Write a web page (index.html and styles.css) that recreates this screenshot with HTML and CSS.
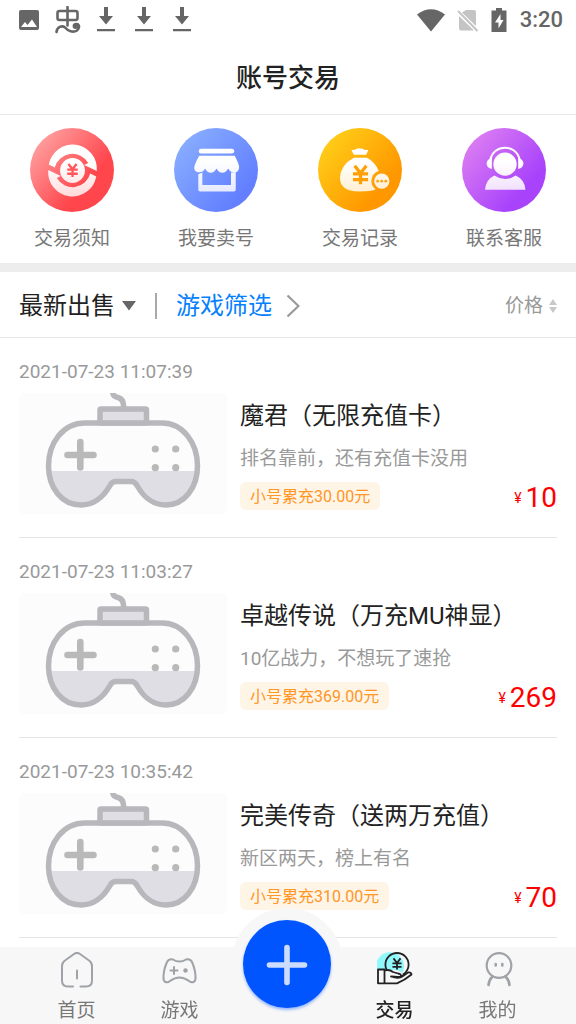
FILE: index.html
```html
<!DOCTYPE html>
<html lang="zh-CN">
<head>
<meta charset="utf-8">
<meta name="viewport" content="width=device-width, initial-scale=1">
<title>账号交易</title>
<link rel="stylesheet" href="styles.css">
</head>
<body>
<svg class="defs" aria-hidden="true">
  <defs>
    <linearGradient id="red" x1="0.1" y1="0.2" x2="0.8" y2="0.8"><stop offset="0" stop-color="#ff9a9a"/><stop offset="0.8" stop-color="#ff464d"/></linearGradient>
    <linearGradient id="blue" x1="0.1" y1="0.2" x2="0.8" y2="0.8"><stop offset="0" stop-color="#86abff"/><stop offset="1" stop-color="#637fff"/></linearGradient>
    <linearGradient id="gold" x1="0.1" y1="0.2" x2="0.8" y2="0.8"><stop offset="0" stop-color="#ffcb17"/><stop offset="0.9" stop-color="#ff9800"/></linearGradient>
    <linearGradient id="violet" x1="0.1" y1="0.2" x2="0.8" y2="0.8"><stop offset="0" stop-color="#d97af3"/><stop offset="0.9" stop-color="#a843fb"/></linearGradient>
    <linearGradient id="shade" x1="0" y1="0" x2="0" y2="83" gradientUnits="userSpaceOnUse"><stop offset="0.4" stop-color="#fff"/><stop offset="0.8" stop-color="#fff" stop-opacity="0.8"/></linearGradient>
    <clipPath id="lower"><rect x="0" y="78" width="208" height="43"/></clipPath>
  </defs>
  <symbol id="yen" viewBox="-10 -10 20 20"><path d="M-5 -8L0 -1.500L5 -8M0 -1.500V8M-6.500 -1H6.500M-6.500 4H6.500"/></symbol>
  <symbol id="download" viewBox="0 0 20 26"><path d="M8 0h4v9h5l-7 8.500L3 9h5zM1 22h18v2.300H1z" fill="#666"/></symbol>
  <symbol id="pad" viewBox="0 0 208 121">
    <path d="M66 30H143C164 30 178.500 50 178.500 73C178.500 95 165 112 147 112C132 112 124 103 118 92.500Q116 88.500 112 88.500H97Q93 88.500 91 92.500C85 103 76 112 62 112C43 112 29.500 95 29.500 73C29.500 50 44 30 66 30Z" fill="#dfdee4" clip-path="url(#lower)"/>
    <g fill="none" stroke="#b8b7bc" stroke-width="5.500">
      <path d="M66 30H143C164 30 178.500 50 178.500 73C178.500 95 165 112 147 112C132 112 124 103 118 92.500Q116 88.500 112 88.500H97Q93 88.500 91 92.500C85 103 76 112 62 112C43 112 29.500 95 29.500 73C29.500 50 44 30 66 30Z"/>
      <path d="M93.500 -1C94 3 96 4 99 4.500C103 5.500 104.700 9 104.700 14"/>
      <rect x="81" y="16" width="46.500" height="14" rx="1" fill="#dfdee4"/>
    </g>
    <path d="M48.500 62H74.500M61.300 49V74.500" stroke="#b9b9b9" stroke-width="6.600" stroke-linecap="round"/>
    <g fill="#b9b9b9"><circle cx="136.300" cy="56" r="3.600"/><circle cx="156.700" cy="56" r="3.600"/><circle cx="136.300" cy="74.700" r="3.600"/><circle cx="156.700" cy="74.700" r="3.600"/></g>
  </symbol>
</svg>

<div class="statusbar">
  <div class="notices">
    <svg width="22" height="22" viewBox="0 0 22 22" aria-hidden="true"><path fill="#666" fill-rule="evenodd" d="M3 1H19Q21 1 21 3V19Q21 21 19 21H3Q1 21 1 19V3Q1 1 3 1ZM3 18H19L14 10.500L9.500 16L7 13Z"/></svg>
    <svg class="bug" width="26" height="28" viewBox="0 0 26 28" fill="none" stroke="#666" stroke-width="2.600" stroke-linecap="round" aria-hidden="true"><rect x="2.500" y="5" width="20" height="9" rx="2"/><path d="M12.500 1V19.500M1.500 26C2 21 7 19 10 21.500C13 25 18 27 22 24.500C25.500 21.500 24 17.500 21 18"/><circle cx="20.500" cy="20" r="1.600" fill="#666"/></svg>
    <svg width="20" height="26" aria-hidden="true"><use href="#download"/></svg>
    <svg width="20" height="26" aria-hidden="true"><use href="#download"/></svg>
    <svg width="20" height="26" aria-hidden="true"><use href="#download"/></svg>
  </div>
  <div class="signals">
    <svg width="28" height="23" viewBox="0 0 28 23" aria-hidden="true"><path d="M0 5.500Q14 -5 28 5.500L14 22.500Z" fill="#666"/></svg>
    <svg width="22" height="23" viewBox="0 0 22 23" aria-hidden="true"><path d="M9 1H17Q19 1 19 3V17L5 3.500ZM2 7L17 21.500H4Q2 21.500 2 19.500Z" fill="#c4c4c4"/><path d="M1 2L20.500 22" stroke="#c4c4c4" stroke-width="2"/></svg>
    <svg class="battery" width="16" height="24" viewBox="0 0 16 24" aria-hidden="true"><path d="M5 0H11V2.500H15.500V24H.5V2.500H5Z" fill="#666"/><path d="M9.500 6L4 14.500H7.500V20.500L12.500 12H9.500Z" fill="#fff"/></svg>
    <time class="clock">3:20</time>
  </div>
</div>

<header class="header"><h1 class="header-title">账号交易</h1></header>

<nav class="shortcuts" aria-label="快捷入口">
  <a class="shortcut" href="#notice">
    <svg width="84" height="84" viewBox="0 0 83 83" aria-hidden="true"><circle cx="41.500" cy="41.500" r="41.500" fill="url(#red)"/>
      <g fill="url(#shade)"><path d="M18.500 36A24 24 0 0 1 66 42.500L53.500 36.500L57.500 34.500A18 18 0 0 0 24.500 39Z"/><path d="M65.500 48A24 24 0 0 1 18 41.500L30.500 47.500L26.500 49.500A18 18 0 0 0 59.500 45Z"/><circle cx="42" cy="42" r="12.300"/></g>
      <use href="#yen" x="34" y="34" width="16" height="16" fill="none" stroke="#ff555b" stroke-width="2.800"/></svg>
    <span>交易须知</span>
  </a>
  <a class="shortcut" href="#sell">
    <svg width="84" height="84" viewBox="0 0 83 83" aria-hidden="true"><circle cx="41.500" cy="41.500" r="41.500" fill="url(#blue)"/>
      <g fill="url(#shade)"><rect x="24.500" y="20.500" width="35" height="4.800" rx="2.400"/><path d="M25 27.300H60Q64.500 36 64.300 38.700C64.300 45.500 56 45.500 53.500 40C51 45.500 44.500 45.500 42 40C39.500 45.500 33 45.500 30.800 40C28 45.500 19.700 45 20 38.700Q21 34 25 27.300Z"/><path d="M24 45.700L28 44V56.300H56.300V44L61 43.700V61Q61 62.700 59.300 62.700H25.700Q24 62.700 24 61Z"/></g></svg>
    <span>我要卖号</span>
  </a>
  <a class="shortcut" href="#records">
    <svg width="84" height="84" viewBox="0 0 83 83" aria-hidden="true"><circle cx="41.500" cy="41.500" r="41.500" fill="url(#gold)"/>
      <g fill="url(#shade)"><path d="M33 21.500Q36 22.500 38 20.500Q41 19.500 44 20.500Q46 22.500 49.700 21.500Q49 24 47.500 26.500H35.500Q34 24 33 21.500Z"/><path d="M35.500 29.300H48.500Q57 34 60 42.500A10.200 10.200 0 0 0 57 60.500Q53 62.700 41 62.700Q21.700 63 21.700 49Q22.500 36 35.500 29.300Z"/><circle cx="63" cy="52.500" r="7.500"/></g>
      <use href="#yen" x="30.500" y="35" width="23" height="23" fill="none" stroke="#ff9f06" stroke-width="2.800"/><g fill="#ffa310"><circle cx="59" cy="52.500" r="1.400"/><circle cx="63" cy="52.500" r="1.400"/><circle cx="67" cy="52.500" r="1.400"/></g></svg>
    <span>交易记录</span>
  </a>
  <a class="shortcut" href="#service">
    <svg width="84" height="84" viewBox="0 0 83 83" aria-hidden="true"><circle cx="41.500" cy="41.500" r="41.500" fill="url(#violet)"/>
      <g fill="url(#shade)"><circle cx="42.500" cy="35.700" r="11.500"/><path d="M29.500 29.500V40.500Q24.300 39 24.300 35Q24.500 31 29.500 29.500ZM55.500 29.500V40.500Q60.700 39 60.700 35Q60.500 31 55.500 29.500ZM32 47Q42.500 54 53 47Q62 51 62.700 61H22.700Q23.500 51 32 47Z"/></g><path d="M28 31.500C31 15.500 54 15.500 57 31.500" fill="none" stroke="#fff" stroke-width="2"/></svg>
    <span>联系客服</span>
  </a>
</nav>

<section class="filters" aria-label="筛选">
  <label class="order">
    <select class="order-select" aria-label="排序"><option>最新出售</option></select>
    <svg width="14" height="10" viewBox="0 0 14 10" aria-hidden="true"><path d="M0 0H14L7 9.500Z" fill="#666"/></svg>
  </label>
  <span class="divider"></span>
  <button class="game-filter" type="button">游戏筛选
    <svg width="14" height="24" viewBox="0 0 14 24" fill="none" stroke="#999" stroke-width="2.200" aria-hidden="true"><path d="M1.500 1.500L12.500 12L1.500 22.500"/></svg>
  </button>
  <button class="price-sort" type="button">价格
    <svg width="8" height="14" viewBox="0 0 8 14" fill="#c8c8c8" aria-hidden="true"><path d="M0 6L4 0L8 6ZM0 8H8L4 14Z"/></svg>
  </button>
</section>

<main class="listing">
  <article class="item">
    <time class="item-time">2021-07-23 11:07:39</time>
    <div class="item-body">
      <svg class="thumb" viewBox="0 0 208 121" role="img" aria-label="游戏手柄"><use href="#pad"/></svg>
      <div class="info">
        <h2 class="name">魔君（无限充值卡）</h2>
        <p class="desc">排名靠前，还有充值卡没用</p>
        <div class="deal"><span class="tag">小号累充30.00元</span><span class="price"><small class="currency">¥</small>10</span></div>
      </div>
    </div>
  </article>
  <article class="item">
    <time class="item-time">2021-07-23 11:03:27</time>
    <div class="item-body">
      <svg class="thumb" viewBox="0 0 208 121" role="img" aria-label="游戏手柄"><use href="#pad"/></svg>
      <div class="info">
        <h2 class="name">卓越传说（万充MU神显）</h2>
        <p class="desc">10亿战力，不想玩了速抢</p>
        <div class="deal"><span class="tag">小号累充369.00元</span><span class="price"><small class="currency">¥</small>269</span></div>
      </div>
    </div>
  </article>
  <article class="item">
    <time class="item-time">2021-07-23 10:35:42</time>
    <div class="item-body">
      <svg class="thumb" viewBox="0 0 208 121" role="img" aria-label="游戏手柄"><use href="#pad"/></svg>
      <div class="info">
        <h2 class="name">完美传奇（送两万充值）</h2>
        <p class="desc">新区两天，榜上有名</p>
        <div class="deal"><span class="tag">小号累充310.00元</span><span class="price"><small class="currency">¥</small>70</span></div>
      </div>
    </div>
  </article>
</main>

<nav class="tabbar" aria-label="主导航">
  <a class="tab" href="#home">
    <svg width="36" height="36" viewBox="0 0 36 36" fill="none" stroke="#9fa2a7" stroke-width="2" stroke-linecap="round" aria-hidden="true"><path d="M14 34.500H9Q3 34.500 3 28.500V14Q3 10.500 6 8.500L15 2Q18 0 21 2L30 8.500Q33 10.500 33 14V28.500Q33 34.500 27 34.500H21.500M18 18.500V26.500"/></svg>
    <span>首页</span>
  </a>
  <a class="tab" href="#games">
    <svg width="36" height="36" viewBox="0 0 36 36" fill="none" stroke="#9fa2a7" stroke-width="2" stroke-linecap="round" stroke-linejoin="round" aria-hidden="true"><path d="M11 7.500Q14 9.500 17.500 9.500Q21 9.500 24 7.500Q28 6.500 30 10Q33.500 18 33.500 25C34 30.500 30 31.500 27 29Q22 25.500 17.500 25.500Q13 25.500 8 29C5 31.500 1 30.500 1.500 25Q1.500 18 5 10Q7 6.500 11 7.500ZM8.500 18.500H15.500M12 15V22"/><circle cx="23.500" cy="18.500" r="2.200" fill="#9fa2a7" stroke="none"/></svg>
    <span>游戏</span>
  </a>
  <div class="publish-slot">
    <button class="publish" type="button" aria-label="发布"><svg width="44" height="44" viewBox="0 0 44 44" aria-hidden="true"><path d="M4.500 23H39.500M22 5.500V40.500" stroke="#cbdcff" stroke-width="5.600" stroke-linecap="round"/></svg></button>
  </div>
  <a class="tab tab-active" href="#trade" aria-current="page">
    <svg width="36" height="36" viewBox="0 0 36 36" fill="none" stroke="#222" stroke-width="1.800" stroke-linejoin="round" aria-hidden="true"><circle cx="13" cy="14.300" r="14" fill="#90f7fb" stroke="none"/><circle cx="20" cy="12.600" r="11.600"/><path d="M11.500 21Q16 28 26 22.500L24 20Q15 15 11.500 21Z" fill="#f7f7f7" stroke="none"/><path d="M8 18.500Q12 17 16 20L21 21.500Q24.500 22 24 24Q23 25.500 14 24.500Q22 27.500 26 24L31 20.500Q34 20 34.500 22.500Q28 28 20 31.300H8" fill="#f7f7f7"/><rect x="1" y="17.500" width="6.500" height="13.800" fill="#f7f7f7"/><use href="#yen" x="13" y="5" width="14" height="14" stroke-width="2.600"/></svg>
    <span>交易</span>
  </a>
  <a class="tab" href="#me">
    <svg width="36" height="36" viewBox="0 0 36 36" fill="none" stroke="#9fa2a7" stroke-width="2.200" stroke-linecap="round" aria-hidden="true"><circle cx="19" cy="13.500" r="12.300"/><path d="M12.500 24.500Q9 28 8.500 33M25.500 24.500Q29 28 29.500 33M15.700 12V13.500M22.300 12V13.500" stroke-width="2.600"/></svg>
    <span>我的</span>
  </a>
</nav>
</body>
</html>
```

FILE: styles.css
```css
* { box-sizing: border-box; }

body {
  margin: 0;
  padding-bottom: 77px;
  background: #fff;
  color: #222;
  font-family: Roboto, "Noto Sans CJK SC", sans-serif;
  font-size: 19px;
  line-height: 26px;
}

h1, h2, p { margin: 0; font-weight: 400; }
a { color: inherit; text-decoration: none; }
svg { display: block; flex: none; }
button, select {
  border: 0;
  padding: 0;
  background: none;
  color: inherit;
  font: inherit;
}
.defs { position: absolute; width: 0; height: 0; }

.statusbar {
  display: flex;
  justify-content: space-between;
  align-items: center;
  height: 40px;
  padding: 0 13px 0 18px;
}
.notices, .signals { display: flex; align-items: center; }
.notices { gap: 18px; }
.bug { margin: 0 -3px 0 -3px; }
.signals { gap: 12px; }
.clock { margin-left: 1px; color: #666; font-size: 22px; font-weight: 500; }

.header {
  padding: 19px 16px 17px;
  border-bottom: 1px solid #e8e8e8;
  text-align: center;
}
.header-title { font-size: 26px; font-weight: 500; line-height: 38px; }

.shortcuts {
  display: grid;
  grid-template-columns: repeat(4, 1fr);
  padding: 13px 0 11px;
  border-bottom: 9px solid #ededed;
}
.shortcut {
  display: flex;
  flex-direction: column;
  align-items: center;
  gap: 14px;
  color: #777;
}

.filters {
  display: flex;
  align-items: center;
  height: 66px;
  padding: 2px 19px 0;
  border-bottom: 1px solid #e8e8e8;
  font-size: 24px;
  line-height: 36px;
}
.order { display: flex; align-items: center; gap: 7px; }
.order-select { appearance: none; }
.divider { width: 2px; height: 26px; margin: 0 19px; background: #aaa; }
.game-filter { display: flex; align-items: center; gap: 14px; color: #0580fe; }
.price-sort {
  display: flex;
  align-items: center;
  gap: 6px;
  margin-left: auto;
  color: #999;
  font-size: 19px;
}

.listing { padding: 0 19px; }
.item { padding: 21px 0 23px; border-bottom: 1px solid #e5e5e5; }
.item-time { display: block; margin-bottom: 8px; color: #999; }
.item-body { display: flex; gap: 13px; }
.thumb { width: 208px; height: 121px; border-radius: 5px; background: #fcfcfc; }
.info { flex: 1; min-width: 0; padding-top: 5px; }
.name { margin-bottom: 12px; font-size: 24px; line-height: 36px; }
.desc { margin-bottom: 10px; color: #999; }
.deal { display: flex; justify-content: space-between; align-items: center; height: 28px; }
.tag {
  height: 28px;
  padding: 0 10px;
  border-radius: 6px;
  background: #fff5e6;
  color: #ff9626;
  font-size: 16px;
  line-height: 30px;
}
.price {
  display: flex;
  align-items: center;
  gap: 4px;
  padding-top: 4px;
  color: #f00;
  font-size: 28px;
}
.currency { font-size: 14px; }

.tabbar {
  position: fixed;
  right: 0;
  bottom: 0;
  left: 0;
  display: grid;
  grid-template-columns: repeat(2, 1fr) 112px repeat(2, 1fr);
  height: 77px;
  padding: 5px 27px 0 25px;
  background: #f7f7f7;
}
.tab {
  display: flex;
  flex-direction: column;
  align-items: center;
  gap: 10px;
  color: #777;
}
.tab-active { color: #222; font-weight: 500; }
.publish-slot {
  display: grid;
  place-items: center;
  width: 112px;
  height: 112px;
  margin-top: -44px;
  border-radius: 50%;
  background: #f7f7f7;
}
.publish {
  display: grid;
  place-items: center;
  width: 88px;
  height: 88px;
  border-radius: 50%;
  background: #0055ff;
  box-shadow: 0 2px 3px #0055ff66;
}
```
